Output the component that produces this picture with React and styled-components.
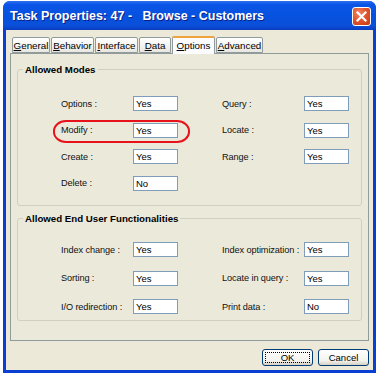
import React from "react";
import styled, { createGlobalStyle } from "styled-components";

const Global = createGlobalStyle`
  html, body { margin: 0; padding: 0; background: #ffffff; }
  body { font-family: "Liberation Sans", Arial, sans-serif; }
`;

const Window = styled.div`
  position: relative;
  margin: 1px 0 0 3px;
  width: 373px;
  height: 372px;
  box-sizing: border-box;
  display: flex;
  flex-direction: column;
  background: #0a3fd4;
  border-radius: 7px 7px 0 0;
  overflow: hidden;
`;

const TitleBar = styled.div`
  height: 29px;
  flex: none;
  display: flex;
  align-items: center;
  justify-content: space-between;
  padding: 0 5px 0 7px;
  background: linear-gradient(180deg, #2b6ef0 0%, #0b55e6 12%, #0652e0 50%, #0a4fd8 85%, #0a3cc0 100%);
`;

const Title = styled.div`
  color: #ffffff;
  font-family: "Liberation Sans", Arial, sans-serif;
  font-weight: bold;
  font-size: 12.5px;
  white-space: pre;
  text-shadow: 1px 1px 0 #0a1e8a;
  padding-top: 1px;
`;

const CloseButton = styled.div`
  width: 19px;
  height: 19px;
  box-sizing: border-box;
  border: 1px solid #ffffff;
  border-radius: 3px;
  background: radial-gradient(circle at 35% 30%, #f0866a 0%, #e2562e 45%, #c23a12 100%);
  display: flex;
  align-items: center;
  justify-content: center;
  margin-top: 2px;
`;

const Frame = styled.div`
  flex: 1;
  margin: 0 3px 3px 3px;
  background: #ece9d8;
  display: flex;
  flex-direction: column;
  padding: 7px 4px 0 4px;
`;

const TabStrip = styled.div`
  display: flex;
  align-items: flex-end;
  height: 16px;
  padding-left: 2px;
  position: relative;
  z-index: 1;
`;

const Tab = styled.div`
  box-sizing: border-box;
  width: ${(p) => p.$w}px;
  height: ${(p) => (p.$active ? "18px" : "16px")};
  margin-bottom: ${(p) => (p.$active ? "-1px" : "0")};
  margin-right: 1px;
  font-size: 9.8px;
  line-height: 13px;
  color: #000;
  background: ${(p) => (p.$active ? "#fcfcfe" : "linear-gradient(180deg, #ffffff 0%, #f3f3ef 60%, #e7e6df 100%)")};
  border: 1px solid #919b9c;
  border-bottom: ${(p) => (p.$active ? "none" : "1px solid #919b9c")};
  border-top: ${(p) => (p.$active ? "2px solid #f0a33a" : "1px solid #919b9c")};
  border-radius: 2px 2px 0 0;
  display: flex;
  justify-content: center;
  align-items: ${(p) => (p.$active ? "flex-start" : "center")};
  padding-top: ${(p) => (p.$active ? "1px" : "0")};
  white-space: nowrap;
  & u { text-decoration: underline; }
`;

const Pane = styled.div`
  width: 359px;
  height: 288px;
  box-sizing: border-box;
  border: 1px solid #919b9c;
  background: #ebe9da;
  padding: 10px 6px 0 6px;
  display: flex;
  flex-direction: column;
  gap: 7px;
`;

const Group = styled.fieldset`
  margin: 0;
  padding: ${(p) => p.$pad};
  border: 1px solid #d0d0bf;
  border-radius: 3px;
  height: ${(p) => p.$h};
  box-sizing: border-box;
`;

const Legend = styled.legend`
  font-weight: bold;
  font-size: 9.7px;
  color: #000;
  padding: 0 2px;
  margin-left: 5px;
`;

const Grid = styled.div`
  display: grid;
  grid-template-columns: 72px 45px 44px 82px 45px;
  row-gap: ${(p) => p.$gap};
  align-items: center;
  padding-left: 43px;
`;

const Label = styled.div`
  font-size: 9.2px;
  color: #111;
  letter-spacing: -0.1px;
  white-space: nowrap;
`;

const Field = styled.div`
  box-sizing: border-box;
  height: 15px;
  width: 45px;
  border: 1px solid #7f9db9;
  background: #ffffff;
  font-size: 9.5px;
  line-height: 13px;
  padding-left: 2px;
  color: #000;
`;

const Spacer = styled.div``;

const ButtonRow = styled.div`
  display: flex;
  justify-content: flex-end;
  gap: 5px;
  padding: 8px 0 0 0;
  width: 359px;
`;

const Button = styled.div`
  width: 51px;
  height: 17px;
  box-sizing: border-box;
  border: 1px solid #003c74;
  border-radius: 3px;
  background: linear-gradient(180deg, #ffffff 0%, #f4f3ee 70%, #d6d0c5 100%);
  font-size: 9.5px;
  display: flex;
  align-items: center;
  justify-content: center;
  color: #000;
  position: relative;
  ${(p) => p.$focus && `
    &::after {
      content: "";
      position: absolute;
      inset: 2px;
      border: 1px dotted #000;
    }
  `}
`;

const Highlight = styled.div`
  position: absolute;
  left: 50px;
  top: 119px;
  width: 137px;
  height: 23px;
  border: 2.5px solid #e8121a;
  border-radius: 13px / 11px;
  box-sizing: border-box;
  pointer-events: none;
`;

function Row({ a, av, b, bv }) {
  return (
    <>
      <Label>{a} :</Label>
      <Field>{av}</Field>
      <Spacer />
      {b ? <Label>{b} :</Label> : <Spacer />}
      {b ? <Field>{bv}</Field> : <Spacer />}
    </>
  );
}

export default function App() {
  return (
    <>
      <Global />
      <Window>
        <TitleBar>
          <Title>{"Task Properties: 47 -   Browse - Customers"}</Title>
          <CloseButton>
            <svg width="11" height="11" viewBox="0 0 11 11">
              <path d="M1.5 1.5 L9.5 9.5 M9.5 1.5 L1.5 9.5" stroke="#fff" strokeWidth="2.2" strokeLinecap="square" />
            </svg>
          </CloseButton>
        </TitleBar>
        <Frame>
          <TabStrip>
            <Tab $w={38}><span><u>G</u>eneral</span></Tab>
            <Tab $w={43}><span><u>B</u>ehavior</span></Tab>
            <Tab $w={43}><span><u>I</u>nterface</span></Tab>
            <Tab $w={32}><span><u>D</u>ata</span></Tab>
            <Tab $w={43} $active><span><u>O</u>ptions</span></Tab>
            <Tab $w={47}><span><u>A</u>dvanced</span></Tab>
          </TabStrip>
          <Pane>
            <Group $h="142px" $pad="21px 0 0 0">
              <Legend>Allowed Modes</Legend>
              <Grid $gap="11.5px">
                <Row a="Options" av="Yes" b="Query" bv="Yes" />
                <Row a="Modify" av="Yes" b="Locate" bv="Yes" />
                <Row a="Create" av="Yes" b="Range" bv="Yes" />
                <Row a="Delete" av="No" />
              </Grid>
            </Group>
            <Group $h="108px" $pad="18px 0 0 0">
              <Legend>Allowed End User Functionalities</Legend>
              <Grid $gap="13.5px">
                <Row a="Index change" av="Yes" b="Index optimization" bv="Yes" />
                <Row a="Sorting" av="Yes" b="Locate in query" bv="Yes" />
                <Row a="I/O redirection" av="Yes" b="Print data" bv="No" />
              </Grid>
            </Group>
          </Pane>
          <ButtonRow>
            <Button $focus>OK</Button>
            <Button>Cancel</Button>
          </ButtonRow>
        </Frame>
        <Highlight />
      </Window>
    </>
  );
}
